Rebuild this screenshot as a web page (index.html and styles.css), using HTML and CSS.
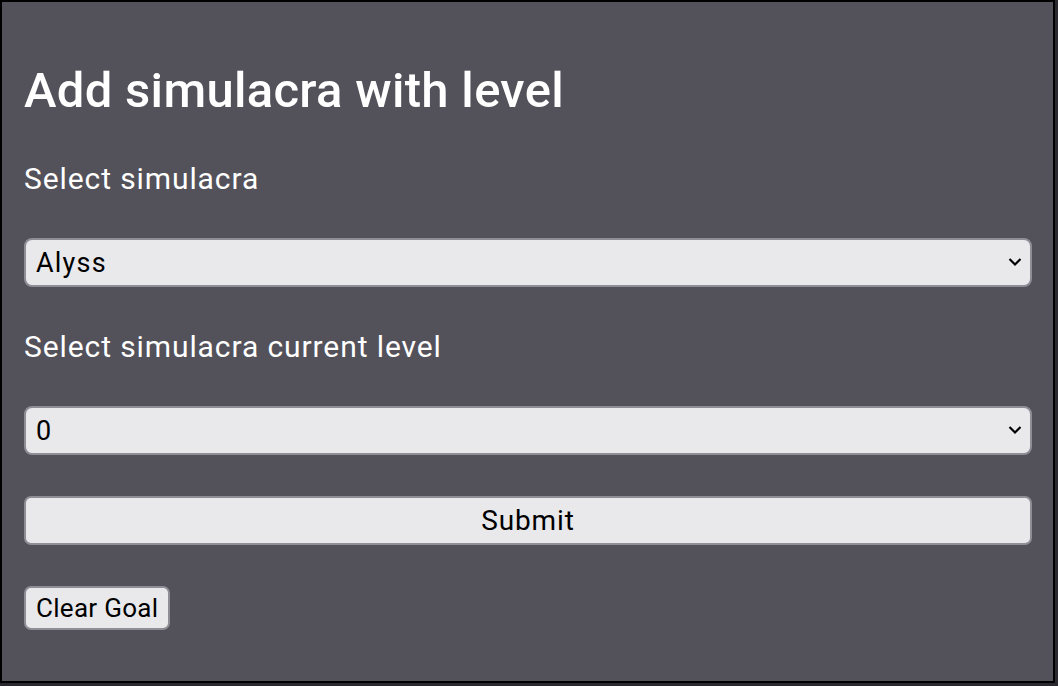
FILE: index.html
```html
<!DOCTYPE html>
<html lang="en">
<head>
<meta charset="utf-8">
<title>Add simulacra with level</title>
<link rel="stylesheet" href="styles.css">
</head>
<body>
<div class="panel">
  <h1 class="title">Add simulacra with level</h1>
  <label class="label" for="sim">Select simulacra</label>
  <div class="select-wrap">
    <select id="sim" class="select"><option>Alyss</option></select>
    <svg class="chev" width="14" height="10" viewBox="0 0 14 10"><path d="M1.5 2 L7 7.5 L12.5 2" fill="none" stroke="#000" stroke-width="2.2"/></svg>
  </div>
  <label class="label" for="lvl">Select simulacra current level</label>
  <div class="select-wrap">
    <select id="lvl" class="select"><option>0</option></select>
    <svg class="chev" width="14" height="10" viewBox="0 0 14 10"><path d="M1.5 2 L7 7.5 L12.5 2" fill="none" stroke="#000" stroke-width="2.2"/></svg>
  </div>
  <button class="btn btn-wide">Submit</button>
  <div class="row"><button class="btn btn-small">Clear Goal</button></div>
</div>
</body>
</html>
```
FILE: styles.css
```css
html { background: #2b2930; }
body { margin: 0; font-family: Roboto, "Liberation Sans", sans-serif; }
.panel {
  box-sizing: border-box;
  width: 1055px;
  height: 683px;
  border: 2px solid #000;
  background: #53515a;
  padding: 61px 21px 0 22px;
  display: flex;
  flex-direction: column;
  align-items: stretch;
}
.title {
  margin: 0;
  font-size: 49px;
  line-height: 56px;
  letter-spacing: 0.3px;
  font-weight: 500;
  color: #fff;
}
.label {
  display: block;
  margin-top: 43px;
  font-size: 30px;
  line-height: 34px;
  letter-spacing: 0.9px;
  color: #fff;
}
.select-wrap {
  position: relative;
  margin-top: 42px;
  height: 49px;
}
.select {
  appearance: none;
  -webkit-appearance: none;
  box-sizing: border-box;
  width: 100%;
  height: 49px;
  margin: 0;
  border: 2px solid #8f8d96;
  border-radius: 8px;
  background: #e9e9ec;
  color: #000;
  font-family: Roboto, "Liberation Sans", sans-serif;
  font-size: 27px;
  letter-spacing: 1.2px;
  padding: 0 40px 0 10px;
}
.chev {
  position: absolute;
  right: 10px;
  top: 19px;
  pointer-events: none;
}
.btn {
  box-sizing: border-box;
  margin: 0;
  border: 2px solid #8f8d96;
  border-radius: 7px;
  background: #e9e9ec;
  color: #000;
  font-family: Roboto, "Liberation Sans", sans-serif;
}
.btn-wide {
  margin-top: 41px;
  height: 49px;
  width: 100%;
  font-size: 28px;
  letter-spacing: 0.9px;
}
.row { margin-top: 41px; display: flex; }
.btn-small {
  height: 44px;
  padding: 0 10px;
  font-size: 26px;
  letter-spacing: 0.3px;
}
```
